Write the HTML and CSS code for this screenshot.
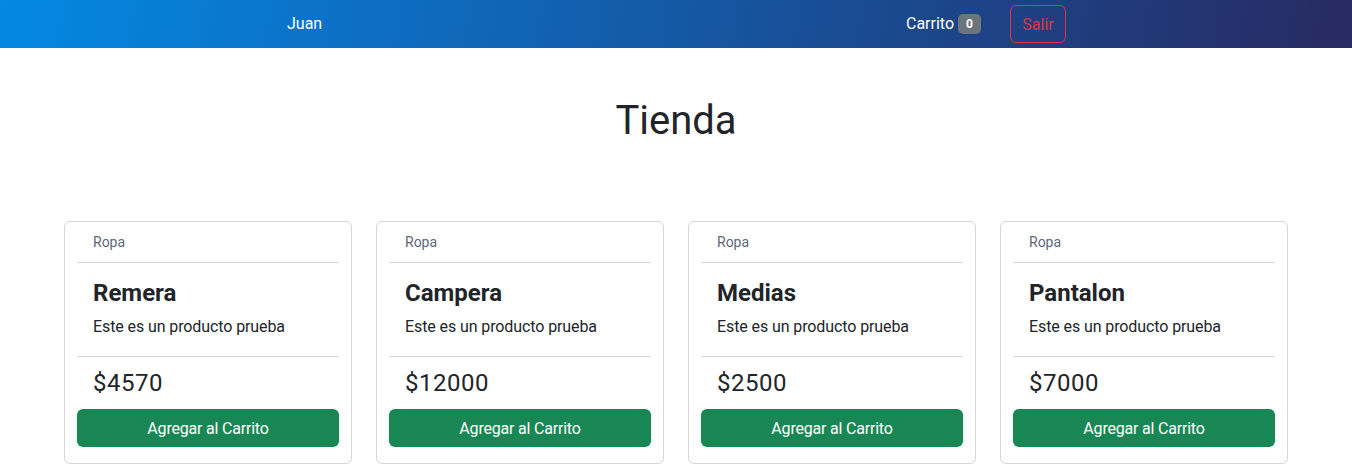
FILE: index.html
```html
<!DOCTYPE html>
<html lang="es">
<head>
<meta charset="utf-8">
<title>Tienda</title>
<link rel="stylesheet" href="styles.css">
</head>
<body>
<nav class="navbar">
  <div class="nav-left"><a class="nav-user" href="#">Juan</a></div>
  <div class="nav-right">
    <a class="nav-cart" href="#">Carrito <span class="badge">0</span></a>
    <button class="btn-salir">Salir</button>
  </div>
</nav>
<main class="main">
  <h1 class="title">Tienda</h1>
  <div class="grid">
    <div class="card">
      <div class="card-header">Ropa</div>
      <div class="card-body">
        <h5 class="card-title">Remera</h5>
        <p class="card-text">Este es un producto prueba</p>
      </div>
      <div class="card-footer">
        <div class="price">$4570</div>
        <button class="btn-add">Agregar al Carrito</button>
      </div>
    </div>
    <div class="card">
      <div class="card-header">Ropa</div>
      <div class="card-body">
        <h5 class="card-title">Campera</h5>
        <p class="card-text">Este es un producto prueba</p>
      </div>
      <div class="card-footer">
        <div class="price">$12000</div>
        <button class="btn-add">Agregar al Carrito</button>
      </div>
    </div>
    <div class="card">
      <div class="card-header">Ropa</div>
      <div class="card-body">
        <h5 class="card-title">Medias</h5>
        <p class="card-text">Este es un producto prueba</p>
      </div>
      <div class="card-footer">
        <div class="price">$2500</div>
        <button class="btn-add">Agregar al Carrito</button>
      </div>
    </div>
    <div class="card">
      <div class="card-header">Ropa</div>
      <div class="card-body">
        <h5 class="card-title">Pantalon</h5>
        <p class="card-text">Este es un producto prueba</p>
      </div>
      <div class="card-footer">
        <div class="price">$7000</div>
        <button class="btn-add">Agregar al Carrito</button>
      </div>
    </div>
  </div>
</main>
</body>
</html>
```
FILE: styles.css
```css
* { box-sizing: border-box; }
html, body { margin: 0; padding: 0; }
body {
  font-family: Roboto, "Noto Sans", sans-serif;
  color: #212529;
  background: #fff;
  font-size: 16px;
  line-height: 1.5;
}
.navbar {
  height: 48px;
  display: flex;
  align-items: center;
  background: linear-gradient(100deg, #0389e2 0%, #0e6cc0 30%, #1a4a90 65%, #282a62 100%);
}
.nav-left { padding-left: 287px; width: 906px; flex: none; }
.nav-user {
  color: #fff;
  text-decoration: none;
  font-size: 16px;
}
.nav-right {
  display: flex;
  align-items: center;
}
.nav-cart {
  color: #fff;
  text-decoration: none;
  font-size: 16px;
  display: flex;
  align-items: center;
  gap: 4px;
}
.badge {
  display: inline-flex;
  align-items: center;
  justify-content: center;
  width: 23px;
  height: 20px;
  background: #6c757d;
  color: #fff;
  font-size: 12px;
  font-weight: 700;
  line-height: 1;
  border-radius: 5px;
}
.btn-salir {
  margin-left: 29px;
  height: 38px;
  width: 56px;
  background: transparent;
  border: 1px solid #dc3545;
  color: #dc3545;
  border-radius: 6px;
  font-family: inherit;
  font-size: 16px;
  padding: 0;
}
.main { padding: 0 64px; }
.title {
  margin: 0;
  padding-top: 49px;
  height: 173px;
  text-align: center;
  font-size: 40px;
  font-weight: 400;
  line-height: 1.2;
}
.grid {
  display: grid;
  grid-template-columns: repeat(4, 1fr);
  gap: 24px;
}
.card {
  border: 1px solid #d6d6d6;
  border-radius: 6px;
  padding: 0 12px 16px;
  display: flex;
  flex-direction: column;
  height: 243px;
}
.card-header {
  padding: 10px 16px 10px;
  font-size: 14px;
  color: #5c6878;
  border-bottom: 1px solid #d6d6d6;
  line-height: 20px;
}
.card-body {
  padding: 16px 16px 17px;
  border-bottom: 1px solid #d6d6d6;
}
.card-title {
  margin: 0 0 8px;
  font-size: 24px;
  font-weight: 700;
  line-height: 28px;
}
.card-text { margin: 0; font-size: 16px; line-height: 24px; letter-spacing: -0.1px; }
.card-footer { padding-top: 10px; }
.price {
  padding: 0 16px;
  font-size: 24px;
  line-height: 32px;
  margin-bottom: 10px;
  letter-spacing: 0.5px;
}
.btn-add {
  display: block;
  width: 100%;
  height: 38px;
  background: #198754;
  color: #fff;
  border: 0;
  border-radius: 6px;
  font-family: inherit;
  font-size: 16px;
  letter-spacing: -0.2px;
}
```
